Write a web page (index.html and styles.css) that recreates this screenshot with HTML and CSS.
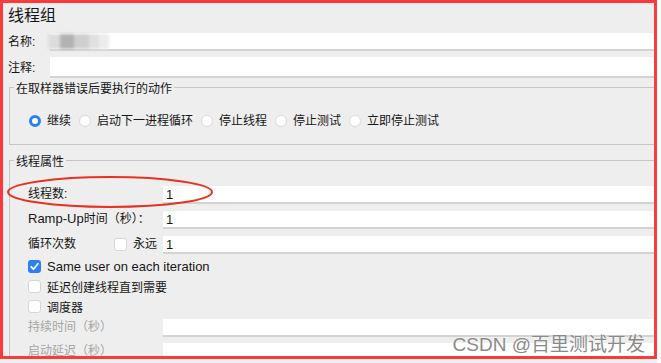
FILE: index.html
```html
<!DOCTYPE html>
<html lang="zh-CN">
<head>
    <meta charset="UTF-8">
    <meta name="viewport" content="width=device-width, initial-scale=1.0">
    <title>线程组</title>
    <link rel="stylesheet" href="styles.css">
</head>
<body>
    <div class="frame">
        <h1 class="title">线程组</h1>

        <div class="row">
            <span class="top-label">名称:</span>
            <div class="field">
                <span class="mosaic"><i class="m1"></i><i class="m2"></i><i class="m3"></i><i class="m4"></i><i class="m5"></i></span>
            </div>
        </div>
        <div class="row comment-row">
            <span class="top-label">注释:</span>
            <div class="field tall"></div>
        </div>

        <fieldset class="group group-error">
            <legend>在取样器错误后要执行的动作</legend>
            <div class="radios">
                <label class="radio-item"><span class="radio checked"></span>继续</label>
                <label class="radio-item"><span class="radio"></span>启动下一进程循环</label>
                <label class="radio-item"><span class="radio"></span>停止线程</label>
                <label class="radio-item"><span class="radio"></span>停止测试</label>
                <label class="radio-item"><span class="radio"></span>立即停止测试</label>
            </div>
        </fieldset>

        <fieldset class="group group-props">
            <legend>线程属性</legend>
            <div class="prop-row">
                <span class="prop-label">线程数:</span>
                <div class="field"><span class="value">1</span></div>
            </div>
            <div class="prop-row">
                <span class="prop-label"><span class="en">Ramp-Up</span>时间（秒）：</span>
                <div class="field"><span class="value">1</span></div>
            </div>
            <div class="prop-row">
                <span class="prop-label"><span class="loop-text">循环次数</span><span class="check"></span>永远</span>
                <div class="field"><span class="value">1</span></div>
            </div>

            <div class="check-row first">
                <span class="check checked">
                    <svg width="13" height="13" viewBox="0 0 13 13"><path d="M3.2 6.8l2.3 2.4 4.4-5.4" fill="none" stroke="#fff" stroke-width="1.8" stroke-linecap="round" stroke-linejoin="round"/></svg>
                </span>
                <span class="en">Same user on each iteration</span>
            </div>
            <div class="check-row"><span class="check"></span>延迟创建线程直到需要</div>
            <div class="check-row"><span class="check"></span>调度器</div>

            <div class="prop-row muted first-muted">
                <span class="prop-label">持续时间（秒）</span>
                <div class="field"></div>
            </div>
            <div class="prop-row muted">
                <span class="prop-label">启动延迟（秒）</span>
                <div class="field"></div>
            </div>
        </fieldset>

        <!-- 标注 -->
        <svg class="mark" width="214" height="36" viewBox="0 0 214 36">
            <ellipse cx="105" cy="17" rx="102" ry="15" fill="none" stroke="#e8321f" stroke-width="2"/>
        </svg>
        <div class="watermark">CSDN @百里测试开发</div>
    </div>
    <div class="under"></div>
</body>
</html>
```

FILE: styles.css
```css
body {
    margin: 0;
    background-color: #fff;
    font-family: "Liberation Sans", "Noto Sans CJK SC", sans-serif;
    font-size: 12px;
    color: #161616;
}

.frame {
    position: relative;
    width: 657px;
    height: 359px;
    box-sizing: border-box;
    border: 3px solid #fb3b3b;
    background-color: #eeeeee;
    overflow: hidden;
}

.under {
    width: 657px;
    height: 4px;
    background-color: #efefef;
}

.title {
    margin: 0;
    padding: 3px 0 0 5px;
    font-size: 16px;
    font-weight: normal;
    line-height: 20px;
    color: #161616;
}

.en {
    font-size: 13px;
}

/* 名称 / 注释 */
.row {
    display: flex;
    align-items: center;
    margin-top: 7px;
    padding-left: 5px;
}

.comment-row {
    margin-top: 6px;
}

.top-label {
    width: 42px;
    flex: none;
    line-height: 16px;
}

.field {
    flex: 1;
    display: flex;
    align-items: center;
    height: 16px;
    background-color: #fff;
    border-bottom: 2px solid #d3d3d3;
}

.field.tall {
    height: 19px;
}

.value {
    padding-left: 3px;
    font-size: 13px;
}

.mosaic {
    display: flex;
    height: 15px;
    margin-left: -2px;
    filter: blur(1.5px);
}

.mosaic i {
    display: block;
    height: 15px;
}

.m1 { width: 12px; background-color: #dcdcdc; }
.m2 { width: 14px; background-color: #b2b2b2; }
.m3 { width: 15px; background-color: #cfcfcf; }
.m4 { width: 10px; background-color: #e0e0e0; }
.m5 { width: 10px; background-color: #ececec; }

/* 分组框 */
.group {
    margin: 0 -12px 0 6px;
    padding: 16px 0 15px 0;
    border: 1px solid #c6c6c6;
    min-width: 0;
}

.group legend {
    margin-left: 4px;
    padding: 3px 2px 0 2px;
    line-height: 16px;
}

.group-props {
    margin-top: 6px;
    padding-bottom: 40px;
}

.radios {
    display: flex;
    align-items: center;
    gap: 8px;
    height: 16px;
    margin-left: 19px;
}

.radio-item {
    display: flex;
    align-items: center;
    line-height: 16px;
}

.radio {
    width: 12px;
    height: 12px;
    margin-right: 6px;
    box-sizing: border-box;
    border-radius: 50%;
    background-color: #fff;
    border: 1px solid #dadada;
}

.radio.checked {
    border: 3.5px solid #2a7ff6;
}

/* 线程属性 */
.prop-row {
    display: flex;
    align-items: flex-start;
    margin: 0 0 7px 18px;
}

.prop-label {
    display: flex;
    align-items: center;
    width: 135px;
    flex: none;
    line-height: 16px;
}

.loop-text {
    width: 86px;
}

.check {
    display: flex;
    width: 13px;
    height: 13px;
    margin-right: 6px;
    box-sizing: border-box;
    border-radius: 3px;
    background-color: #fff;
    border: 1px solid #d6d6d6;
}

.check.checked {
    background-color: #2a7ff6;
    border: none;
}

.check-row {
    display: flex;
    align-items: center;
    height: 20px;
    margin-left: 18px;
}

.check-row.first {
    margin-top: -5px;
}

.muted {
    color: #a6a6a6;
    margin-bottom: 6px;
}

.first-muted {
    margin-top: 3px;
}

/* 标注和水印 */
.mark {
    position: absolute;
    left: 2px;
    top: 172px;
}

.watermark {
    position: absolute;
    right: 9px;
    top: 332px;
    font-size: 19px;
    line-height: 20px;
    color: #8a8a8a;
    text-shadow: 0 0 2px #fff;
}
```
